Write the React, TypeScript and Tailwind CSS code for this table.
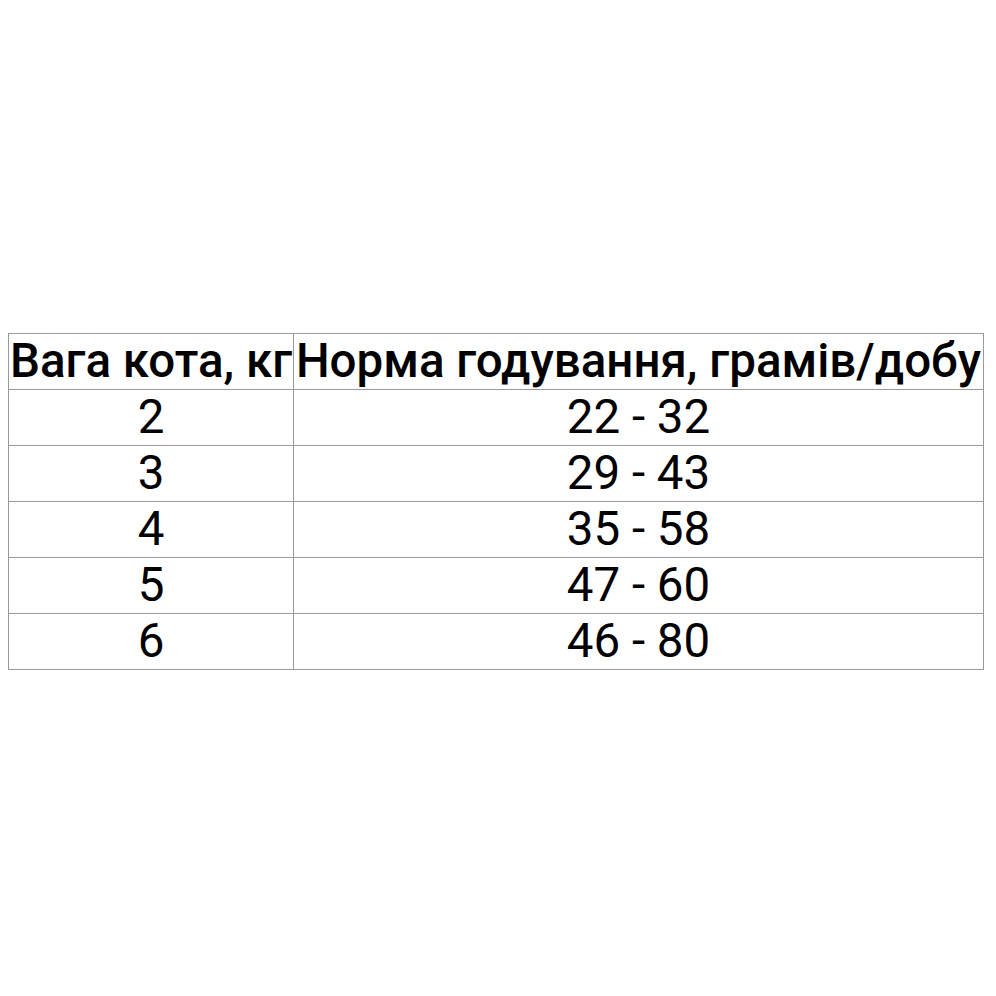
import React from 'react';

const rows = [
  { weight: '2', norm: '22 - 32' },
  { weight: '3', norm: '29 - 43' },
  { weight: '4', norm: '35 - 58' },
  { weight: '5', norm: '47 - 60' },
  { weight: '6', norm: '46 - 80' },
];

const App: React.FC = () => {
  return (
    <div className="w-[996px] h-[996px] bg-white pt-[333px] pl-[8px]" style={{ fontFamily: 'Roboto, "Noto Sans", sans-serif' }}>
      <table className="border-collapse table-fixed w-[975px] text-black">
        <colgroup>
          <col className="w-[285px]" />
          <col className="w-[690px]" />
        </colgroup>
        <thead>
          <tr>
            <th className="h-[56px] p-0 border border-[#9a9a9a] text-[47.5px] font-medium leading-none text-center whitespace-nowrap">Вага кота, кг</th>
            <th className="h-[56px] p-0 border border-[#9a9a9a] text-[47.5px] font-medium leading-none text-center whitespace-nowrap">Норма годування, грамів/добу</th>
          </tr>
        </thead>
        <tbody>
          {rows.map(r => (
            <tr key={r.weight}>
              <td className="h-[56px] p-0 border border-[#9a9a9a] text-[47.5px] leading-none text-center">{r.weight}</td>
              <td className="h-[56px] p-0 border border-[#9a9a9a] text-[47.5px] leading-none text-center">{r.norm}</td>
            </tr>
          ))}
        </tbody>
      </table>
    </div>
  );
};

export default App;
